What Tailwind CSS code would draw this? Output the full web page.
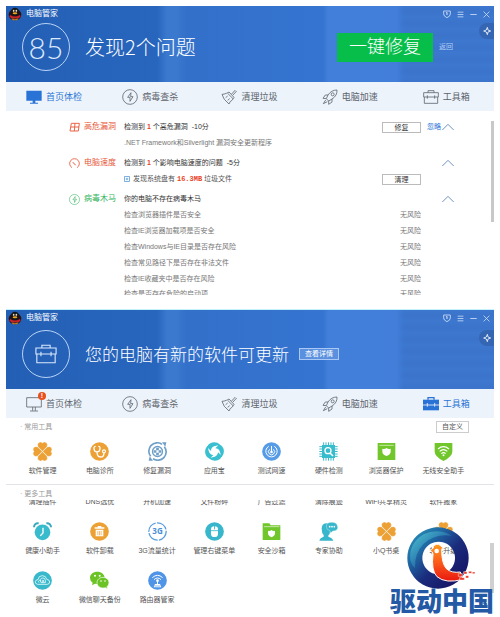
<!DOCTYPE html>
<html lang="zh-CN">
<head>
<meta charset="utf-8">
<meta name="viewport" content="width=device-width, initial-scale=1">
<title>电脑管家</title>
<script src="https://cdn.jsdelivr.net/npm/@tailwindcss/browser@4"></script>
</head>
<body class="bg-white font-['Liberation_Sans','Noto_Sans_CJK_SC',sans-serif] text-[7px] leading-[10px] text-[#555]">

<svg class="absolute size-0" aria-hidden="true">
  <defs>
    <linearGradient id="ringFill" x1="0" y1="0" x2="1" y2="1">
      <stop offset="0" stop-color="#2f9dbd"/><stop offset=".3" stop-color="#1f68a4"/><stop offset=".55" stop-color="#1b2c7c"/><stop offset="1" stop-color="#150a5c"/>
    </linearGradient>
    <linearGradient id="ringGlow" x1="0" y1="0" x2="1" y2="1">
      <stop offset="0" stop-color="#5fd6de"/><stop offset="1" stop-color="#2f8fc0" stop-opacity="0"/>
    </linearGradient>
    <linearGradient id="birdFill" x1="0" y1="0" x2="0" y2="1">
      <stop offset="0" stop-color="#ff9a1f"/><stop offset=".5" stop-color="#fb5a1c"/><stop offset="1" stop-color="#e8170f"/>
    </linearGradient>
  </defs>

  <symbol id="penguin" viewBox="0 0 42 42">
    <ellipse cx="21" cy="23" rx="19" ry="17" fill="#2a1014"/>
    <ellipse cx="21" cy="15" rx="13" ry="13" fill="#15161c"/>
    <ellipse cx="17" cy="12" rx="2.500" ry="3.500" fill="#f3dcae"/><ellipse cx="25" cy="12" rx="2.500" ry="3.500" fill="#f3dcae"/>
    <circle cx="18" cy="13" r="1.3"/><circle cx="24" cy="13" r="1.3"/>
    <ellipse cx="21" cy="19" rx="7" ry="3" fill="#f2a21e"/>
    <path d="M6 24q15 9 30 0l2 6q-17 9-34 0z" fill="#c8242a"/>
    <path d="M10 34q11 5 22 0l-4 6H14z" fill="#b9802b"/>
  </symbol>
  <symbol id="shield" viewBox="0 0 24 24" fill="none" stroke="currentColor" stroke-width="2.4">
    <path d="M2 3h20v9q0 7-10 11Q2 19 2 12z"/><path d="M12 7v8M9.500 8h2.500" stroke-width="3"/>
  </symbol>
  <symbol id="menu" viewBox="0 0 24 24" fill="none" stroke="currentColor" stroke-width="2.6"><path d="M2 4h20M2 12h20M2 20h20"/></symbol>
  <symbol id="minus" viewBox="0 0 24 24" fill="none" stroke="currentColor" stroke-width="2.8"><path d="M1 12h22"/></symbol>
  <symbol id="close" viewBox="0 0 24 24" fill="none" stroke="currentColor" stroke-width="2.6"><path d="M2 2l20 20M22 2L2 22"/></symbol>
  <symbol id="spark" viewBox="0 0 24 24" fill="none" stroke="currentColor" stroke-width="2.400"><path d="M13 1l2 8 8 3-8 3-2 8-3-8-8-3 8-3z"/></symbol>

  <symbol id="monitorFull" viewBox="0 0 48 48" fill="currentColor"><path d="M1 5h46v30H1zM20 35h8v6h8v3H12v-3h8z"/></symbol>
  <symbol id="monitor" viewBox="0 0 48 48" fill="none" stroke="currentColor" stroke-width="2.400"><path d="M2 5h44v28H2zM20 33v11M28 33v11M12 45h24"/></symbol>
  <symbol id="bolt" viewBox="0 0 48 48" fill="none" stroke="currentColor" stroke-width="2.400"><circle cx="24" cy="24" r="22"/><path d="M27 11L17 25h7v12l9-14h-7z"/></symbol>
  <symbol id="broom" viewBox="0 0 48 48" fill="none" stroke="currentColor" stroke-width="2.400"><path d="M43 3L32 15M47 6L36 18M20 13L36 29M24 9q-5 3-8 4Q9 16 3 16q3 15 21 29 2-8 10-12l5-8zM14 26l6-5M20 34l6-5"/></symbol>
  <symbol id="rocket" viewBox="0 0 48 48" fill="none" stroke="currentColor" stroke-width="2.400"><path d="M45 3Q28 3 18 18L13 29l7 7 10-6Q46 20 45 3zM18 18H10L3 28l10 1M30 30v9l-10 7V36"/><circle cx="32" cy="16" r="4.500"/><path d="M11 33l-7 11 12-6"/></symbol>
  <symbol id="toolbox" viewBox="0 0 48 48" fill="none" stroke="currentColor" stroke-width="2.400"><path d="M2 11h44v13H2zM4 24v19h40V24M15 11V5h18v6M13 19v10M35 19v10"/></symbol>
  <symbol id="toolboxFull" viewBox="0 0 48 48"><path d="M0 11h48v32H0z" fill="currentColor"/><path d="M15 11V5h18v6" fill="none" stroke="currentColor" stroke-width="4"/><path d="M0 27h48M13 21v11M35 21v11" stroke="#edf3fb" stroke-width="2.600"/></symbol>

  <symbol id="leak" viewBox="0 0 33 33" fill="none" stroke="currentColor" stroke-width="2.800"><path d="M7 4h24l-3 23H3zM18 4l-2 23M5 15h25"/></symbol>
  <symbol id="speed" viewBox="0 0 33 33" fill="none" stroke="currentColor" stroke-width="2.600"><path d="M9 29A14.500 14.500 0 1 1 24 29M11 12l6 7M16 17l4 5"/></symbol>
  <symbol id="chevron" viewBox="0 0 36 24" fill="none" stroke="currentColor" stroke-width="3"><path d="M1 21L18 4l17 17"/></symbol>
  <symbol id="plusbox" viewBox="0 0 18 18" fill="none" stroke="currentColor" stroke-width="2"><path d="M1.500 1.500h15v15h-15zM5 9h8M9 5v8"/></symbol>

  <symbol id="clover" viewBox="0 0 57 57" fill="#eda034" stroke="#fff">
    <g id="leaf"><path d="M28.500 28L15 14q-3-8 2-12 6-4 11.500 1 5.500-5 11.500-1 5 4 2 12z" stroke-width="1"/></g>
    <use href="#leaf" transform="rotate(90 28.500 28.500)"/><use href="#leaf" transform="rotate(180 28.500 28.500)"/><use href="#leaf" transform="rotate(270 28.500 28.500)"/>
  </symbol>
  <symbol id="doctor" viewBox="0 0 57 57"><circle cx="28.500" cy="28.500" r="28" fill="#eda034"/><path d="M17 13q-6 0-5 8 1 9 9 9t9-9q1-8-5-8M21 30q0 15 11 15 10 0 10-13" fill="none" stroke="#fff" stroke-width="4"/><circle cx="42" cy="28" r="4.500" fill="none" stroke="#fff" stroke-width="3.500"/></symbol>
  <symbol id="patch" viewBox="0 0 57 57" fill="none" stroke="#6d9fc9" stroke-width="5"><path d="M8 43A25 25 0 0 1 42 7M49 14A25 25 0 0 1 15 50"/><path d="M42 1h13l-3 13zM15 56H2l3-13z" fill="#6d9fc9" stroke="none"/><circle cx="28.500" cy="28.500" r="15" stroke-width="4"/><path d="M28.500 17v8M28.500 32v8M17 28.500h8M32 28.500h8" stroke-width="8"/></symbol>
  <symbol id="appstore" viewBox="0 0 57 57" fill="#38bfd0"><path d="M19 2Q34-2 46 8L27 13q-9 3-9 14L6 15q4-10 13-13zM55 19q5 14-5 27l-6-18q-3-9-13-9L43 7q9 4 12 12zM38 55q-15 4-27-6l18-5q9-3 10-13l12 11q-4 10-13 13zM2 38q-5-14 5-27l5 18q3 9 13 10L14 50Q5 47 2 38z"/></symbol>
  <symbol id="nettest" viewBox="0 0 57 57"><circle cx="28.500" cy="28.500" r="28" fill="#559be6"/><path d="M28.500 12v20M20 13a17 17 0 1 0 17 0M23 22a9 9 0 1 0 11 0" fill="none" stroke="#fff" stroke-width="3"/><circle cx="28.500" cy="30" r="4" fill="#fff"/></symbol>
  <symbol id="chip" viewBox="0 0 57 57"><path d="M9 9h39v39H9z" fill="#38bccd"/><path d="M14 1v55M21 1v55M28.500 1v55M36 1v55M43 1v55M1 14h55M1 21h55M1 28.500h55M1 36h55M1 43h55" stroke="#38bccd" stroke-width="3"/><circle cx="27" cy="26" r="9" fill="none" stroke="#fff" stroke-width="4"/><path d="M33 33l9 9" stroke="#fff" stroke-width="4.500"/></symbol>
  <symbol id="browser" viewBox="0 0 57 57"><path d="M2 3h53v51H2z" fill="#70c62b"/><path d="M7 10h43" stroke="#d5efbd" stroke-width="2.500"/><path d="M16 20q7 2 12.500-2Q34 22 41 20v9q0 8-12.500 13Q16 37 16 29z" fill="#fff"/></symbol>
  <symbol id="wifi" viewBox="0 0 57 57"><path d="M2 3h53v26q0 14-26.500 28Q2 43 2 29z" fill="#70c62b"/><path d="M12 21q16.500-14 33 0M17 28q11.500-10 23 0M22 35q6.500-6 13 0" fill="none" stroke="#fff" stroke-width="3.500"/><circle cx="28.500" cy="40" r="3" fill="#fff"/></symbol>
  <symbol id="alarm" viewBox="0 0 57 57"><circle cx="28.500" cy="31" r="23.500" fill="#38bccd"/><path d="M3 16Q3 3 17 4M54 16Q54 3 40 4" fill="none" stroke="#38a9bd" stroke-width="6"/><path d="M30 17v16l-8 8" fill="none" stroke="#fff" stroke-width="4"/></symbol>
  <symbol id="uninstall" viewBox="0 0 57 57"><circle cx="28.500" cy="28.500" r="28" fill="#eda034"/><path d="M14 16h29v4H14zM23 12h11v4H23zM17 23h23v20H17z" fill="#fff"/><path d="M23.500 27v13M28.500 27v13M33.500 27v13" stroke="#eda034" stroke-width="2"/></symbol>
  <symbol id="traffic" viewBox="0 0 57 57"><circle cx="28.500" cy="28.500" r="26" fill="none" stroke="#5b9ee0" stroke-width="4" stroke-dasharray="36 4"/><text x="28.500" y="37" text-anchor="middle" font-family="Open Sans" font-weight="700" font-size="24" fill="#4a8fd8">3G</text></symbol>
  <symbol id="mouse" viewBox="0 0 57 57"><circle cx="28.500" cy="28.500" r="28" fill="#38b6cb"/><rect x="18" y="13" width="21" height="32" rx="10" fill="#fff"/><path d="M18 26h21M28.500 10v12" stroke="#38b6cb" stroke-width="2.500"/></symbol>
  <symbol id="sandbox" viewBox="0 0 57 57"><path d="M2 4h20l4 6h29v44H2z" fill="#70c62b"/><path d="M6 14h46" stroke="#d5efbd" stroke-width="2.500"/><path d="M18 26q6 2 10.500-2Q33 28 39 26v8q0 8-10.500 12Q18 42 18 34z" fill="#fff"/></symbol>
  <symbol id="expert" viewBox="0 0 57 57"><path d="M8 20Q8 4 24 4q6 0 9 6v22q-2 7-5 8v4q12 3 15 12H1q2-9 13-12v-5Q8 33 8 20z" fill="#38b6cb"/><path d="M22 14Q22 1 38 1t18 13-14 13q-5 5-9 6 1-4 0-7-11-2-11-12z" fill="#38b6cb" stroke="#fff" stroke-width="1"/><circle cx="32" cy="14" r="2.500" fill="#fff"/><circle cx="39" cy="14" r="2.500" fill="#fff"/><circle cx="46" cy="14" r="2.500" fill="#fff"/></symbol>
  <symbol id="cloud" viewBox="0 0 57 57"><circle cx="28.500" cy="28.500" r="28" fill="#38b8cb"/><path d="M14 40q-8-1-7-8 1-6 8-6 1-12 13-12 11 0 13 11 9 1 9 8 0 6-7 7zM18 35q-4-4 1-7 3-1 5 2M24 35q-6-13 5-14 10 0 8 14zM28 34v-6h4v6" fill="none" stroke="#e8fafc" stroke-width="2.500"/></symbol>
  <symbol id="wechat" viewBox="0 0 57 57"><path d="M22 2C9 2 0 10 0 21q0 9 8 14l-2 8 9-5q4 1 8 1C35 39 44 32 44 21S34 2 22 2z" fill="#6cc326"/><path d="M39 19c-10 0-18 7-18 16s8 16 18 16q4 0 7-1l7 4-2-7q6-4 6-12c0-9-8-16-18-16z" fill="#6cc326" stroke="#fff" stroke-width="2"/><g fill="#fff"><circle cx="15" cy="14" r="3"/><circle cx="29" cy="14" r="3"/><circle cx="33" cy="30" r="2.500"/><circle cx="45" cy="30" r="2.500"/></g></symbol>
  <symbol id="router" viewBox="0 0 57 57"><circle cx="28.500" cy="28.500" r="28" fill="#4f94e6"/><path d="M13 20q15.500-14 31 0M18 26q10.500-10 21 0M28.500 30v10" fill="none" stroke="#fff" stroke-width="3"/><circle cx="28.500" cy="29" r="4" fill="#fff"/><path d="M17 49l4-10h15l4 10z" fill="#fff"/><path d="M20 45h17" stroke="#4f94e6" stroke-width="2"/></symbol>
</svg>

<main class="px-1.5 pt-1.5">

  <section aria-label="首页体检">
    <header class="relative overflow-hidden bg-[linear-gradient(90deg,#235fb4_0%,#2866be_31%,#3b79ce_33%,#3b79ce_35%,#3270ca_37%,#3574d0_65%,#427fda_66%,#437fda_100%)] pb-[11px] text-white">
      <div class="absolute -inset-y-1 -right-1 w-1/5 bg-[repeating-linear-gradient(180deg,#3a72c8_0px,#3a72c8_7px,#3468b8_9px,#3a72c8_12px)] opacity-60 blur-[2px]"></div>
      <div class="relative flex h-4 items-center pr-1 pl-0.5">
        <svg class="size-[14px]"><use href="#penguin"/></svg>
        <h1 class="ml-1 text-[8px]">电脑管家</h1>
        <div class="ml-auto flex items-center gap-1.5 text-[#d5e4fa]">
          <button aria-label="安全"><svg class="block size-2"><use href="#shield"/></svg></button>
          <button aria-label="菜单"><svg class="block size-[7px]"><use href="#menu"/></svg></button>
          <button aria-label="最小化"><svg class="block size-[7px]"><use href="#minus"/></svg></button>
          <button aria-label="关闭"><svg class="block size-[7px]"><use href="#close"/></svg></button>
        </div>
      </div>
      <div class="relative flex items-center pt-px pl-4">
        <div class="flex size-12 shrink-0 items-center justify-center rounded-full border border-[#b9d3f7] font-['Lato'] text-[30px] leading-8 font-light text-[#dbe9fd]">85</div>
        <h2 class="ml-[15px] font-['Noto_Sans_CJK_SC',sans-serif] text-[20px] leading-6 font-light">发现2个问题</h2>
        <div class="ml-auto flex items-center self-stretch">
          <button class="h-[29px] w-24 bg-[#08be4a] text-[18px] leading-6 font-light">一键修复</button>
          <a href="#" class="ml-1.5 text-[#b5cff5]">返回</a>
          <button aria-label="换肤" class="ml-[26px] flex h-4 w-[15px] items-center justify-center self-start rounded-l-full bg-[#3566b4]"><svg class="size-2"><use href="#spark"/></svg></button>
        </div>
      </div>
    </header>
    <nav class="grid h-[29px] grid-cols-[96fr_99fr_100fr_101fr_71fr] items-center bg-[#edf3fb] pl-5 text-[9px] text-[#5c636c]">
      <a href="#" class="flex items-center gap-1 text-[#2a73d6]"><svg class="size-4"><use href="#monitorFull"/></svg>首页体检</a>
      <a href="#" class="flex items-center gap-1"><svg class="size-4"><use href="#bolt"/></svg>病毒查杀</a>
      <a href="#" class="flex items-center gap-1"><svg class="size-4"><use href="#broom"/></svg>清理垃圾</a>
      <a href="#" class="flex items-center gap-1"><svg class="size-4"><use href="#rocket"/></svg>电脑加速</a>
      <a href="#" class="flex items-center gap-1"><svg class="size-4"><use href="#toolbox"/></svg>工具箱</a>
    </nav>

    <div class="flex h-[184px] overflow-hidden pt-2">
      <div class="ml-[63px] flex-1">
        <div class="mb-1">
          <div class="flex h-4 items-center text-[#333]">
            <svg class="size-[11px] text-[#e8593a]"><use href="#leak"/></svg>
            <h3 class="ml-1 w-10 text-[8px] text-[#e8593a]">高危漏洞</h3>
            <p>检测到 <b class="text-[#e8421c]">1</b> 个高危漏洞 &nbsp;-10分</p>
            <button class="ml-auto h-[11px] w-[39px] border border-[#bbb] leading-[9px]">修复</button>
            <a href="#" class="ml-1.5 w-[15px] text-[#2a73d6]">忽略</a>
            <button aria-label="收起"><svg class="h-2 w-3 text-[#6d93c4]"><use href="#chevron"/></svg></button>
          </div>
          <p class="pl-[55px] leading-4 text-[#777]">.NET Framework和Silverlight 漏洞安全更新程序</p>
        </div>
        <div class="mb-1">
          <div class="flex h-4 items-center text-[#333]">
            <svg class="size-[11px] text-[#e8593a]"><use href="#speed"/></svg>
            <h3 class="ml-1 w-10 text-[8px] text-[#e8593a]">电脑速度</h3>
            <p>检测到 <b class="text-[#e8421c]">1</b> 个影响电脑速度的问题 &nbsp;-5分</p>
            <button aria-label="收起" class="ml-auto"><svg class="h-2 w-3 text-[#6d93c4]"><use href="#chevron"/></svg></button>
          </div>
          <div class="flex h-4 items-center pr-[33px] pl-[55px]">
            <svg class="size-1.5 text-[#3f8ad0]"><use href="#plusbox"/></svg>
            <p class="ml-[3px]">发现系统盘有 <b class="font-['Liberation_Mono'] text-[#e8421c]">16.3MB</b> 垃圾文件</p>
            <button class="ml-auto h-[11px] w-[39px] border border-[#bbb] leading-[9px] text-[#333]">清理</button>
          </div>
        </div>
        <div>
          <div class="flex h-4 items-center text-[#333]">
            <svg class="size-[11px] text-[#2fb35c]"><use href="#bolt"/></svg>
            <h3 class="ml-1 w-10 text-[8px] text-[#2fb35c]">病毒木马</h3>
            <p>你的电脑不存在病毒木马</p>
            <button aria-label="收起" class="ml-auto"><svg class="h-2 w-3 text-[#6d93c4]"><use href="#chevron"/></svg></button>
          </div>
          <ul class="pr-[33px] pl-[55px] leading-4 text-[#777]">
            <li class="flex justify-between"><span>检查浏览器插件是否安全</span><span>无风险</span></li>
            <li class="flex justify-between"><span>检查IE浏览器加载项是否安全</span><span>无风险</span></li>
            <li class="flex justify-between"><span>检查Windows与IE目录是否存在风险</span><span>无风险</span></li>
            <li class="flex justify-between"><span>检查常见路径下是否存在非法文件</span><span>无风险</span></li>
            <li class="flex justify-between"><span>检查IE收藏夹中是否存在风险</span><span>无风险</span></li>
            <li class="flex justify-between leading-[14px]"><span>检查是否存在危险的启动项</span><span>无风险</span></li>
          </ul>
        </div>
      </div>
      <div class="mt-0.5 ml-[37px] h-[101px] w-[3px] bg-[#c8c8c8]"></div>
    </div>
  </section>

  <section aria-label="工具箱" class="relative mt-3.5 border-t border-[#c5f1fb] pb-3">
    <header class="relative overflow-hidden bg-[linear-gradient(90deg,#235fb4_0%,#2866be_31%,#3b79ce_33%,#3b79ce_35%,#3270ca_37%,#3574d0_65%,#427fda_66%,#437fda_100%)] pb-[11px] text-white">
      <div class="absolute -inset-y-1 -right-1 w-1/5 bg-[repeating-linear-gradient(180deg,#3a72c8_0px,#3a72c8_7px,#3468b8_9px,#3a72c8_12px)] opacity-60 blur-[2px]"></div>
      <div class="relative flex h-4 items-center pr-1 pl-0.5">
        <svg class="size-[14px]"><use href="#penguin"/></svg>
        <h1 class="ml-1 text-[8px]">电脑管家</h1>
        <div class="ml-auto flex items-center gap-1.5 text-[#d5e4fa]">
          <button aria-label="安全"><svg class="block size-2"><use href="#shield"/></svg></button>
          <button aria-label="菜单"><svg class="block size-[7px]"><use href="#menu"/></svg></button>
          <button aria-label="最小化"><svg class="block size-[7px]"><use href="#minus"/></svg></button>
          <button aria-label="关闭"><svg class="block size-[7px]"><use href="#close"/></svg></button>
        </div>
      </div>
      <div class="relative flex items-center pt-1 pl-4">
        <div class="flex size-12 shrink-0 items-center justify-center rounded-full border border-[#b9d3f7] text-[#dbe9fd]"><svg class="size-[22px]"><use href="#toolbox"/></svg></div>
        <h2 class="ml-[15px] font-['Noto_Sans_CJK_SC',sans-serif] text-[17px] leading-6 font-light">您的电脑有新的软件可更新</h2>
        <button class="ml-2.5 h-3 w-10 border border-[#a9c8f5] bg-[#5a90de] leading-[10px]">查看详情</button>
        <button aria-label="换肤" class="ml-auto flex h-4 w-[15px] items-center justify-center self-start rounded-l-full bg-[#3566b4]"><svg class="size-2"><use href="#spark"/></svg></button>
      </div>
    </header>
    <nav class="grid h-[29px] grid-cols-[96fr_99fr_100fr_101fr_71fr] items-center bg-[#edf3fb] pl-5 text-[9px] text-[#5c636c]">
      <a href="#" class="relative flex items-center gap-1"><svg class="size-4"><use href="#monitor"/></svg>首页体检<span class="absolute -top-1 left-3 flex size-2 items-center justify-center rounded-full bg-[#e8501c] text-[7px] leading-none font-bold text-white">!</span></a>
      <a href="#" class="flex items-center gap-1"><svg class="size-4"><use href="#bolt"/></svg>病毒查杀</a>
      <a href="#" class="flex items-center gap-1"><svg class="size-4"><use href="#broom"/></svg>清理垃圾</a>
      <a href="#" class="flex items-center gap-1"><svg class="size-4"><use href="#rocket"/></svg>电脑加速</a>
      <a href="#" class="flex items-center gap-1 text-[#2a73d6]"><svg class="size-4"><use href="#toolboxFull"/></svg>工具箱</a>
    </nav>

    <div class="border-b border-[#e2e4e8] pb-2">
      <div class="flex h-[18px] items-center justify-between pr-[25px] pl-3.5">
        <h3 class="text-[#999]">· 常用工具</h3>
        <button class="h-3 w-[33px] border border-[#ccc] leading-[10px]">自定义</button>
      </div>
      <div id="common" class="mt-1.5 grid grid-cols-8 pr-[22px] pl-2"></div>
    </div>
    <div class="pt-1">
      <h3 class="h-[11px] pl-3.5 text-[#999]">· 更多工具</h3>
      <div class="overflow-hidden">
        <div id="more" class="-mt-[3px] grid grid-cols-8 gap-y-[15px] pr-[22px] pl-2"></div>
      </div>
    </div>

    <div class="absolute right-0 bottom-6 h-[50px] w-1 bg-[#d0d0d0]"></div>
    <div class="absolute right-0 bottom-0.5 flex flex-col items-center">
      <svg class="h-[62px] w-[70px]" viewBox="0 0 210 186" role="img" aria-label="驱动中国">
        <path fill-rule="evenodd" fill="url(#ringFill)" d="M93 1a92 92 0 1 1-.1 0zM95 44a49 49 0 1 0 .1 0z"/>
        <path d="M10 100Q4 50 50 22q44-20 84 4-50-8-84 24-28 28-26 74-10-8-14-24z" fill="url(#ringGlow)" opacity=".7"/>
        <path d="M78 64q2-14 17-12l12 9q-2 4-3 8 0 40 14 56 16 14 42 10l8 22q-52 14-78-8-18-18-12-68 0-8-9-8 4-8 9-9z" fill="url(#birdFill)" stroke="#fff" stroke-width="3"/>
        <circle cx="89" cy="72" r="7" fill="#fff"/>
        <path d="M154 140h12v8h-12zM170 134h10v7h-10zM158 152h14v7h-14zM176 146h9v7h-9zM185 133h9v6h-9zM196 135h8v5h-8z" fill="#ee2a17" stroke="#fff" stroke-width="1.500"/>
      </svg>
      <strong class="text-[26px] leading-[26px] font-black text-[#2459a6]">驱动中国</strong>
    </div>
  </section>
</main>

<script>
  const common = [['clover','软件管理'],['doctor','电脑诊所'],['patch','修复漏洞'],['appstore','应用宝'],['nettest','测试网速'],['chip','硬件检测'],['browser','浏览器保护'],['wifi','无线安全助手']];
  // Entries with no icon belong to the row that is scrolled under the section title.
  const more = [['','清理插件'],['','DNS选优'],['','开机加速'],['','文件粉碎'],['','广告过滤'],['','清除痕迹'],['','WiFi共享精灵'],['','软件搬家'],
    ['alarm','健康小助手'],['uninstall','软件卸载'],['traffic','3G流量统计'],['mouse','管理右键菜单'],['sandbox','安全沙箱'],['expert','专家协助'],['clover','小Q书桌'],['clover','软件升级'],
    ['cloud','微云'],['wechat','微信聊天备份'],['router','路由器管家']];
  const tile = ([icon, name]) => `<button class="flex flex-col items-center gap-[5px] whitespace-nowrap">${icon ? `<svg class="size-[19px]"><use href="#${icon}"/></svg>` : ''}<span>${name}</span></button>`;
  document.getElementById('common').innerHTML = common.map(tile).join('');
  document.getElementById('more').innerHTML = more.map(tile).join('');
</script>
</body>
</html>
